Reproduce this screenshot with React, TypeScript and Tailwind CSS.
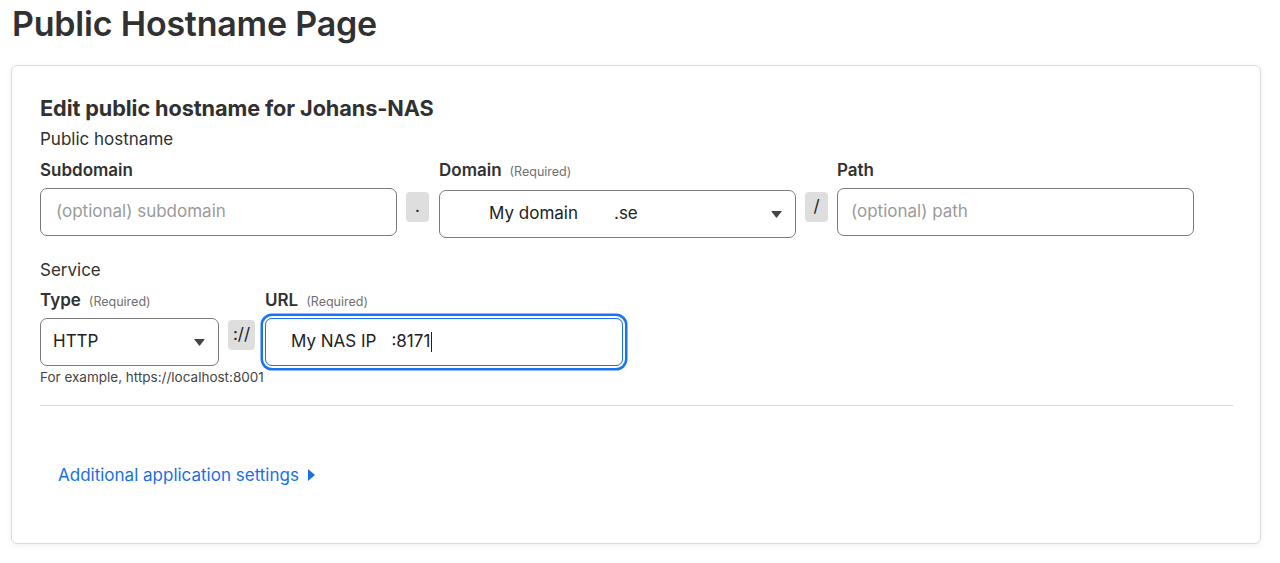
import React from "react";

function Caret() {
  return (
    <svg width="11" height="7" viewBox="0 0 11 7" className="shrink-0">
      <path d="M0 0 L11 0 L5.5 7 Z" fill="#444" />
    </svg>
  );
}

function Sep({ children, w }: { children: React.ReactNode; w: string }) {
  return (
    <div className={`mt-[4px] h-[30px] ${w} shrink-0 rounded-[4px] bg-[#dedede] flex items-center justify-center text-[17px] text-[#222]`}>
      {children}
    </div>
  );
}

export default function App() {
  return (
    <div className="min-h-screen bg-white font-['Inter',sans-serif] text-[#313131]">
      <h1 className="pl-[12px] text-[34px] font-semibold leading-[48px] tracking-[-0.2px]">
        Public Hostname Page
      </h1>
      <div className="ml-[11px] mr-[19px] mt-[17px] rounded-[6px] border border-[#dcdcdc] bg-white pl-[28px] pr-[27px] pt-[28px] pb-[56px] shadow-[0_2px_6px_rgba(0,0,0,0.06)]">
        <h2 className="text-[21.7px] font-bold leading-[28px] tracking-[-0.1px]">
          Edit public hostname for Johans-NAS
        </h2>
        <div className="mt-[5px] text-[17px] leading-[24px]">Public hostname</div>

        <div className="mt-[7px] flex items-start">
          <div className="w-[357px] shrink-0">
            <div className="text-[17px] font-semibold leading-[24px]">Subdomain</div>
            <div className="mt-[6px] h-[48px] rounded-[7px] border border-[#7a7a7a] flex items-center pl-[15px] text-[17px] text-[#9a9a9a]">
              (optional) subdomain
            </div>
          </div>
          <div className="ml-[9px] pt-[30px]">
            <Sep w="w-[23px]">.</Sep>
          </div>
          <div className="ml-[10px] w-[357px] shrink-0">
            <div className="flex items-baseline gap-[8px] leading-[24px]">
              <span className="text-[17px] font-semibold">Domain</span>
              <span className="text-[12.5px] text-[#707070]">(Required)</span>
            </div>
            <div className="mt-[6px] h-[48px] rounded-[7px] border border-[#7a7a7a] flex items-center pl-[49px] pr-[13px] text-[17px] text-[#222]">
              <span>My domain</span>
              <span className="ml-[36px]">.se</span>
              <span className="flex-1" />
              <Caret />
            </div>
          </div>
          <div className="ml-[9px] pt-[30px]">
            <Sep w="w-[23px]">/</Sep>
          </div>
          <div className="ml-[9px] w-[357px] shrink-0">
            <div className="text-[17px] font-semibold leading-[24px]">Path</div>
            <div className="mt-[6px] h-[48px] rounded-[7px] border border-[#7a7a7a] flex items-center pl-[13px] text-[17px] text-[#9a9a9a]">
              (optional) path
            </div>
          </div>
        </div>

        <div className="mt-[20px] text-[17px] leading-[24px]">Service</div>
        <div className="mt-[6px] flex items-start">
          <div className="w-[179px] shrink-0">
            <div className="flex items-baseline gap-[8px] leading-[24px]">
              <span className="text-[17px] font-semibold">Type</span>
              <span className="text-[12.5px] text-[#707070]">(Required)</span>
            </div>
            <div className="mt-[4px] h-[48px] rounded-[7px] border border-[#7a7a7a] flex items-center pl-[12px] pr-[13px] text-[17px] text-[#222]">
              <span>HTTP</span>
              <span className="flex-1" />
              <Caret />
            </div>
          </div>
          <div className="ml-[9px] pt-[28px]">
            <Sep w="w-[27px]">://</Sep>
          </div>
          <div className="ml-[10px] w-[358px] shrink-0">
            <div className="flex items-baseline gap-[8px] leading-[24px]">
              <span className="text-[17px] font-semibold">URL</span>
              <span className="text-[12.5px] text-[#707070]">(Required)</span>
            </div>
            <div className="mt-[4px] h-[48px] rounded-[7px] border border-[#1a73f0] shadow-[0_0_0_2px_#fff,0_0_0_4.5px_#1a73f0] flex items-center pl-[25px] text-[17px] text-[#222]">
              <span>My NAS IP</span>
              <span className="ml-[15px]">:8171</span>
              <span className="ml-[1px] h-[20px] w-[1px] bg-[#222]" />
            </div>
          </div>
        </div>
        <div className="mt-[3px] text-[13.5px] leading-[16px] text-[#444]">
          For example, https://localhost:8001
        </div>

        <div className="mt-[20px] h-px bg-[#d8d8d8]" />

        <div className="mt-[57px] pl-[18px] flex items-center text-[17px] leading-[24px] text-[#1a6fe8]">
          <span>Additional application settings</span>
          <svg width="7" height="12" viewBox="0 0 7 12" className="ml-[9px]">
            <path d="M0 0 L7 6 L0 12 Z" fill="#1a6fe8" />
          </svg>
        </div>
      </div>
    </div>
  );
}
